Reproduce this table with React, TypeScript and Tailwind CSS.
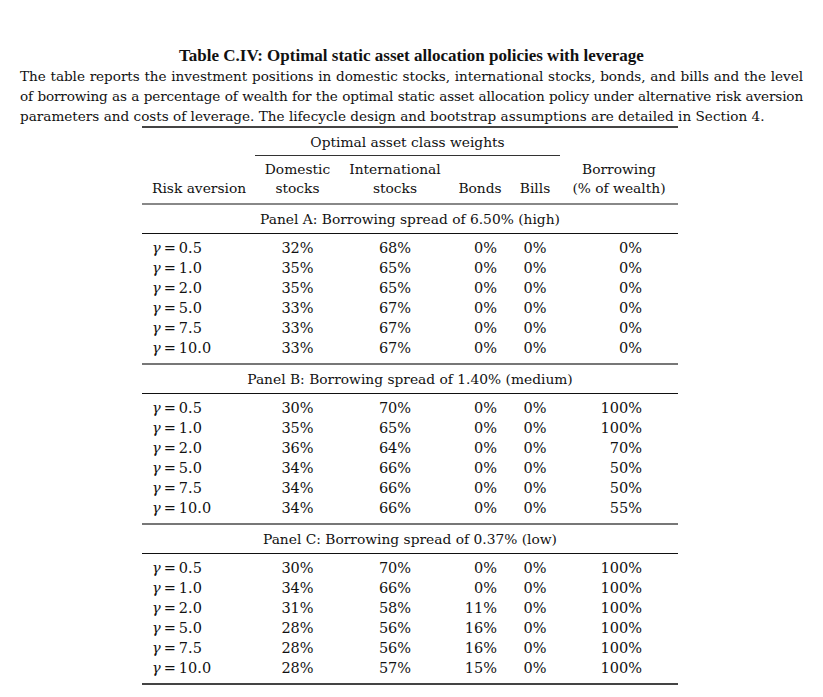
import React from "react";

type Row = [string, string, string, string, string, string];

const panels: { title: string; rows: Row[] }[] = [
  {
    title: "Panel A: Borrowing spread of 6.50% (high)",
    rows: [
      ["0.5", "32%", "68%", "0%", "0%", "0%"],
      ["1.0", "35%", "65%", "0%", "0%", "0%"],
      ["2.0", "35%", "65%", "0%", "0%", "0%"],
      ["5.0", "33%", "67%", "0%", "0%", "0%"],
      ["7.5", "33%", "67%", "0%", "0%", "0%"],
      ["10.0", "33%", "67%", "0%", "0%", "0%"],
    ],
  },
  {
    title: "Panel B: Borrowing spread of 1.40% (medium)",
    rows: [
      ["0.5", "30%", "70%", "0%", "0%", "100%"],
      ["1.0", "35%", "65%", "0%", "0%", "100%"],
      ["2.0", "36%", "64%", "0%", "0%", "70%"],
      ["5.0", "34%", "66%", "0%", "0%", "50%"],
      ["7.5", "34%", "66%", "0%", "0%", "50%"],
      ["10.0", "34%", "66%", "0%", "0%", "55%"],
    ],
  },
  {
    title: "Panel C: Borrowing spread of 0.37% (low)",
    rows: [
      ["0.5", "30%", "70%", "0%", "0%", "100%"],
      ["1.0", "34%", "66%", "0%", "0%", "100%"],
      ["2.0", "31%", "58%", "11%", "0%", "100%"],
      ["5.0", "28%", "56%", "16%", "0%", "100%"],
      ["7.5", "28%", "56%", "16%", "0%", "100%"],
      ["10.0", "28%", "57%", "15%", "0%", "100%"],
    ],
  },
];

const grid = "grid grid-cols-[113px_85px_110px_60px_50px_118px]";

function DataRow({ r }: { r: Row }) {
  return (
    <div className={`${grid} h-[20px] items-center text-[14.5px]`}>
      <div className="pl-[10px] whitespace-nowrap">
        <span className="italic">γ</span>
        <span className="px-[3px]">=</span>
        {r[0]}
      </div>
      <div className="text-center">{r[1]}</div>
      <div className="text-center">{r[2]}</div>
      <div className="text-right pr-[13px]">{r[3]}</div>
      <div className="text-center">{r[4]}</div>
      <div className="text-right pr-[36px]">{r[5]}</div>
    </div>
  );
}

export default function App() {
  return (
    <div
      className="bg-white text-[#111] w-[823px] h-[697px] overflow-hidden text-[13.8px] leading-[20px]"
      style={{ fontFamily: '"DejaVu Serif", "Liberation Serif", serif' }}
    >
      <div className="pt-[46px] px-[20px] text-[13.6px]">
        <div
          className="text-center font-bold text-[17px]"
          style={{ fontFamily: '"Liberation Serif", "Times New Roman", serif' }}
        >
          Table C.IV: Optimal static asset allocation policies with leverage
        </div>
        <div className="text-justify [text-align-last:justify] whitespace-nowrap tracking-[-0.05px]">
          The table reports the investment positions in domestic stocks, international stocks, bonds, and bills and the level
        </div>
        <div className="text-justify [text-align-last:justify] whitespace-nowrap tracking-[-0.15px]">
          of borrowing as a percentage of wealth for the optimal static asset allocation policy under alternative risk aversion
        </div>
        <div className="whitespace-nowrap">
          parameters and costs of leverage. The lifecycle design and bootstrap assumptions are detailed in Section 4.
        </div>
      </div>

      <div className="ml-[142px] w-[536px]">
        <div className="h-[2px] bg-[#444]" />
        <div className={`${grid} h-[27px] items-center`}>
          <div />
          <div className="col-span-4 text-center">Optimal asset class weights</div>
          <div />
        </div>
        <div className={grid}>
          <div />
          <div className="col-span-4 h-[1px] bg-[#333]" />
          <div />
        </div>
        <div className={`${grid} h-[47px] items-end pb-[5px]`}>
          <div className="pl-[10px] whitespace-nowrap">Risk aversion</div>
          <div className="text-center leading-[19px]">
            Domestic
            <br />
            stocks
          </div>
          <div className="text-center leading-[19px]">
            International
            <br />
            stocks
          </div>
          <div className="text-center">Bonds</div>
          <div className="text-center">Bills</div>
          <div className="text-center leading-[19px] whitespace-nowrap">
            Borrowing
            <br />
            (% of wealth)
          </div>
        </div>
        {panels.map((p, i) => (
          <div key={i}>
            <div className={`h-[2px] ${i === 0 ? "bg-[#888]" : "bg-[#777]"}`} />
            <div className="h-[28px] flex items-center justify-center">{p.title}</div>
            <div className="h-[1px] bg-[#111]" />
            <div className="pt-[4px] pb-[5px]">
              {p.rows.map((r, j) => (
                <DataRow key={j} r={r} />
              ))}
            </div>
          </div>
        ))}
        <div className="h-[2px] bg-[#444]" />
      </div>
    </div>
  );
}
